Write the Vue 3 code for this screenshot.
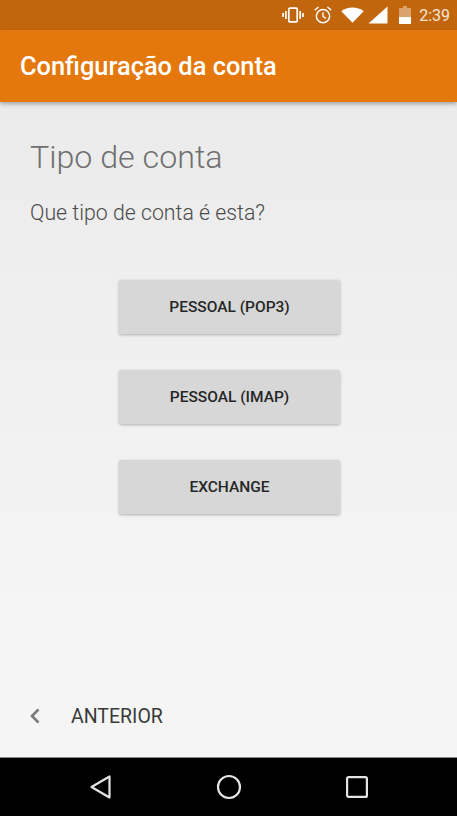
<script setup>
const accountTypes = ['PESSOAL (POP3)', 'PESSOAL (IMAP)', 'EXCHANGE']
</script>

<template>
  <div class="phone">
    <!-- Status bar -->
    <div class="status">
      <svg class="ic vib" width="22" height="16" viewBox="0 0 22 16">
        <rect x="6.8" y="1.2" width="8.4" height="13.6" rx="1" fill="none" stroke="#fff" stroke-width="1.7" />
        <rect x="3" y="4" width="1.7" height="8" fill="#fff" />
        <rect x="17.3" y="4" width="1.7" height="8" fill="#fff" />
        <rect x="0.2" y="6" width="1.7" height="4" fill="#fff" />
        <rect x="20.1" y="6" width="1.7" height="4" fill="#fff" />
      </svg>
      <svg class="ic" width="20" height="20" viewBox="0 0 18 18">
        <circle cx="9" cy="10" r="6" fill="none" stroke="#fff" stroke-width="1.3" />
        <path d="M9 6.5V10.3L11.6 12M1.6 4.6L5 1.8M16.4 4.6L13 1.8" fill="none" stroke="#fff" stroke-width="1.2" />
      </svg>
      <svg class="wifi" width="23" height="16" viewBox="0 0 23 16">
        <path d="M0.3 4.2C3.3 1.8 7.2 0.6 11.5 0.6S19.7 1.8 22.7 4.2L11.5 15.8Z" fill="#fff" />
      </svg>
      <svg class="signal" width="20" height="18" viewBox="0 0 19 17">
        <path d="M0.5 16.5L18.5 0.5V16.5Z" fill="#fff" />
      </svg>
      <svg class="batt" width="12" height="18" viewBox="0 0 12 18">
        <path d="M4 0H8V2H12V18H0V2H4Z" fill="#fff" fill-opacity="0.4" />
        <rect y="11" width="12" height="7" fill="#fff" />
      </svg>
      <span class="clock">2:39</span>
    </div>

    <!-- App bar -->
    <div class="appbar">Configuração da conta</div>

    <!-- Content -->
    <div class="content">
      <h1 class="title">Tipo de conta</h1>
      <p class="question">Que tipo de conta é esta?</p>
      <div class="buttons">
        <button v-for="t in accountTypes" :key="t" class="btn">{{ t }}</button>
      </div>
    </div>

    <!-- Footer -->
    <div class="footer">
      <svg class="chev" width="12" height="16" viewBox="0 0 12 16">
        <path d="M9.5 1.5L3 8L9.5 14.5" fill="none" stroke="#7b7b7b" stroke-width="2.6" />
      </svg>
      <span class="prev">ANTERIOR</span>
    </div>

    <!-- Nav bar -->
    <div class="nav">
      <svg width="24" height="26" viewBox="0 0 24 26">
        <path d="M20.5 2.5V23.5L2.5 13Z" fill="none" stroke="#e4e4e4" stroke-width="2.2" stroke-linejoin="round" />
      </svg>
      <svg width="26" height="26" viewBox="0 0 26 26">
        <circle cx="13" cy="13" r="11" fill="none" stroke="#e4e4e4" stroke-width="2.2" />
      </svg>
      <svg width="24" height="24" viewBox="0 0 24 24">
        <rect x="2.1" y="2.1" width="19.8" height="19.8" rx="1.5" fill="none" stroke="#e4e4e4" stroke-width="2.2" />
      </svg>
    </div>
  </div>
</template>

<style scoped>
.phone {
  width: 457px;
  height: 816px;
  display: flex;
  flex-direction: column;
  overflow: hidden;
  font-family: Roboto, "Liberation Sans", sans-serif;
}

.status {
  height: 30px;
  flex-shrink: 0;
  background: #c2660e;
  display: flex;
  align-items: center;
  justify-content: flex-end;
  padding-right: 7px;
  box-sizing: border-box;
}

.ic { margin-right: 8px; flex-shrink: 0; }
.vib { margin-right: 9px; }
.wifi { margin-right: 4px; flex-shrink: 0; }
.signal { margin-right: 11px; flex-shrink: 0; }
.batt { margin-right: 8px; flex-shrink: 0; }

.clock {
  color: #f4e6d8;
  font-size: 16px;
}

.appbar {
  height: 72px;
  flex-shrink: 0;
  background: #e5780d;
  color: #fff;
  font-size: 25.4px;
  font-weight: 500;
  line-height: 72px;
  padding-left: 20px;
  box-shadow: 0 2px 4px rgba(0, 0, 0, 0.3);
  position: relative;
}

.content {
  flex: 1;
  background: linear-gradient(#ebebeb, #f6f6f6);
  padding: 0 30px;
}

.title {
  margin: 34px 0 0;
  font-size: 32.2px;
  font-weight: 300;
  line-height: 42px;
  color: #707070;
}

.question {
  margin: 21px 0 0;
  font-size: 21.3px;
  font-weight: 300;
  line-height: 28px;
  color: #4a4a4a;
}

.buttons {
  margin-top: 53px;
  padding-left: 2px;
  display: flex;
  flex-direction: column;
  align-items: center;
  gap: 36px;
}

.btn {
  width: 221px;
  height: 54px;
  padding: 0;
  border: none;
  border-radius: 2px;
  background: #d6d7d6;
  color: #262626;
  font-family: inherit;
  font-size: 15.5px;
  font-weight: 500;
  box-shadow: 0 1px 3px rgba(0, 0, 0, 0.28);
}

.footer {
  height: 80px;
  flex-shrink: 0;
  background: #f5f5f5;
  display: flex;
  align-items: center;
  box-sizing: border-box;
  padding: 0 0 2px 29px;
}

.chev { margin-right: 30px; }

.prev {
  font-size: 19.5px;
  color: #3a3a3a;
}

.nav {
  height: 59px;
  flex-shrink: 0;
  background: #000;
  border-top: 1px solid #8a8a8a;
  box-sizing: border-box;
  padding-left: 1px;
  display: grid;
  grid-template-columns: repeat(3, 128px);
  justify-content: center;
  justify-items: center;
  align-items: center;
}
</style>
